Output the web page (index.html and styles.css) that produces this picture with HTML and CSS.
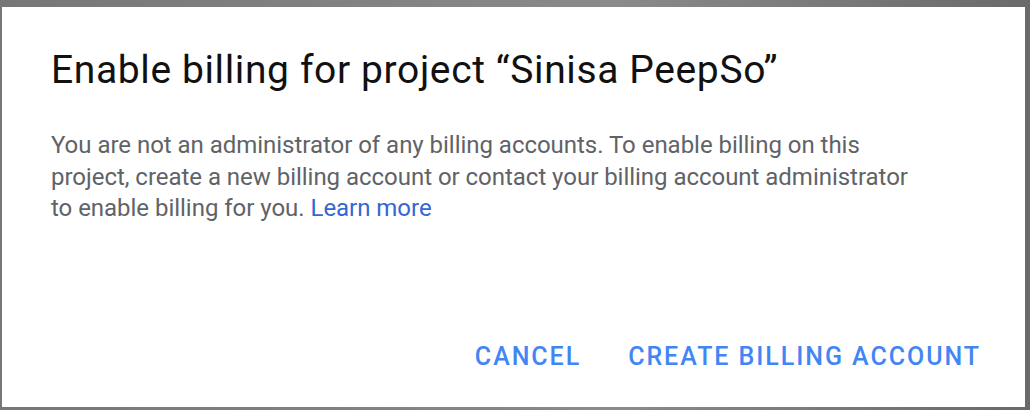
FILE: index.html
```html
<!DOCTYPE html>
<html>
<head>
<meta charset="utf-8">
<link rel="stylesheet" href="styles.css">
</head>
<body>
<div class="frame">
  <div class="dialog">
    <h1 class="title">Enable billing for project “Sinisa PeepSo”</h1>
    <p class="text">You are not an administrator of any billing accounts. To enable billing on this project, create a new billing account or contact your billing account administrator to enable billing for you. <a class="link" href="#">Learn more</a></p>
    <div class="actions">
      <button class="btn">CANCEL</button>
      <button class="btn">CREATE BILLING ACCOUNT</button>
    </div>
  </div>
</div>
</body>
</html>
```

FILE: styles.css
```css
html, body {
  margin: 0;
  padding: 0;
  width: 1030px;
  height: 410px;
  overflow: hidden;
}
body {
  background: linear-gradient(90deg, #777 0%, #8a8a8a 60%, #6a6a6a 100%);
  font-family: Roboto, "Liberation Sans", Arial, sans-serif;
}
.frame {
  box-sizing: border-box;
  width: 1030px;
  height: 410px;
  padding: 7px 5px 3px 2px;
  display: flex;
}
.dialog {
  flex: 1;
  background: #fff;
  display: flex;
  flex-direction: column;
  padding: 39px 44px 0 49px;
}
.title {
  margin: 0;
  font-weight: 400;
  font-size: 39px;
  line-height: 48px;
  color: #111;
  letter-spacing: 0.62px;
}
.text {
  margin: 36px 0 0 0;
  font-size: 24px;
  line-height: 31.5px;
  color: #5f6368;
  letter-spacing: -0.03px;
  max-width: 870px;
}
.link {
  color: #3367d6;
  text-decoration: none;
}
.actions {
  margin-top: auto;
  display: flex;
  justify-content: flex-end;
  gap: 47px;
  padding: 0 0 35px 0;
}
.btn {
  border: 0;
  background: none;
  padding: 0;
  font-family: Roboto, "Liberation Sans", Arial, sans-serif;
  font-weight: 500;
  font-size: 25px;
  line-height: 30px;
  color: #4285f4;
  letter-spacing: 1.95px;
}
```
